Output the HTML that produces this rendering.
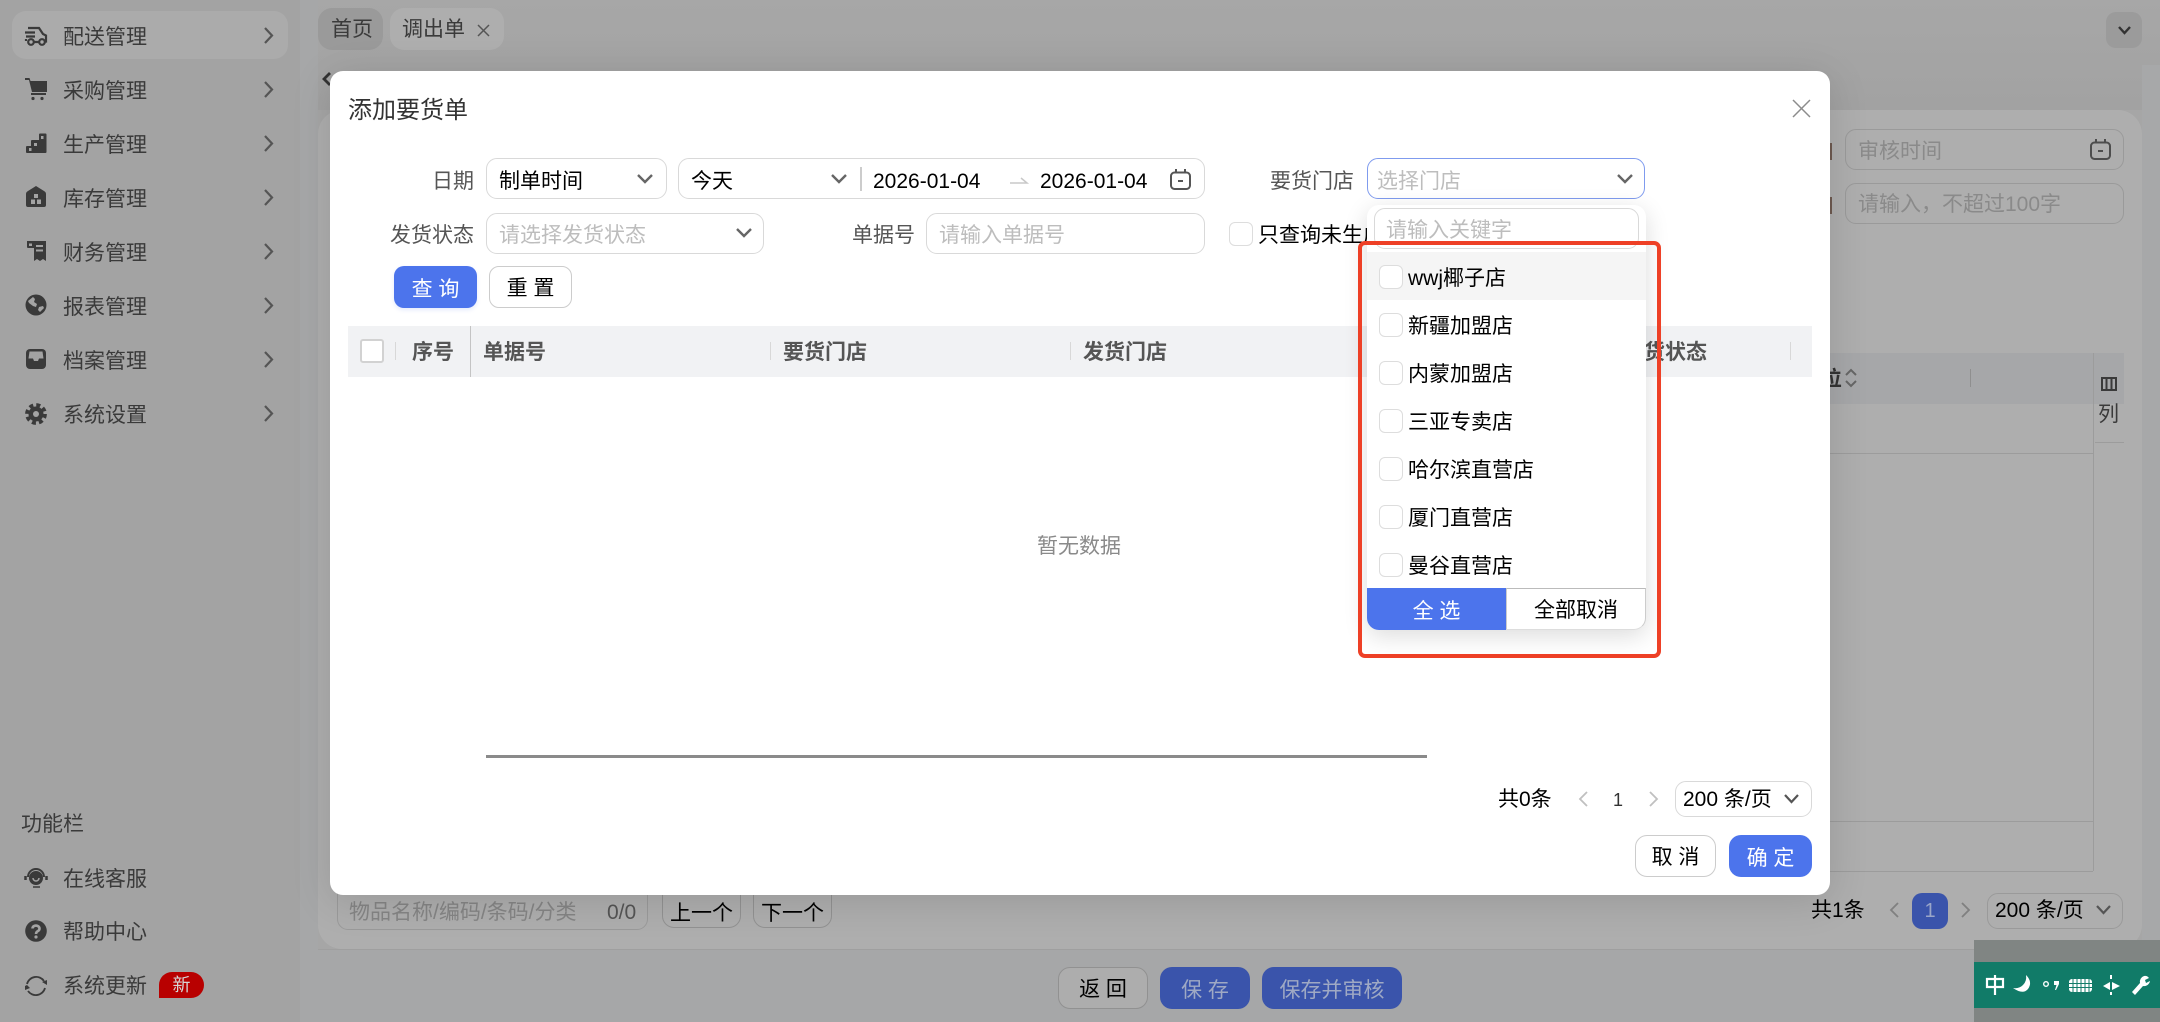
<!DOCTYPE html>
<html lang="zh"><head><meta charset="utf-8"><title>添加要货单</title>
<style>
*{box-sizing:border-box;margin:0;padding:0}
html,body{width:2160px;height:1022px;overflow:hidden;background:#a6a6a6}
body{position:relative;font-family:"Liberation Sans","Noto Sans CJK SC",sans-serif;font-size:21px;color:#000}
.a,.t,.b,.i{position:absolute}
.t{white-space:nowrap;line-height:30px;height:30px;margin-top:2px}
.b{text-align:center;white-space:nowrap;border-radius:10px;padding-top:2px}
.i{border:1.5px solid #d9d9d9;border-radius:11px;background:#fff}
.g{border-color:#9a9a9a;background:transparent}
svg{position:absolute;overflow:visible}
.s{color:#3a3a3a}
.h{font-weight:700;color:#555}
.cb{position:absolute;left:1379px;width:24px;height:24px;border:1.5px solid #ddd;border-radius:6px;background:#fff}
.p{color:#bdbdbd}
</style></head><body>
<!-- backgrounds -->
<div class="a" style="left:0;top:0;width:300px;height:1022px;background:#a3a3a3"></div>
<div class="a" style="left:300px;top:0;width:18px;height:1022px;background:#a6a7a8"></div>
<div class="a" style="left:318px;top:0;width:1842px;height:110px;background:linear-gradient(#a7a7a7,#a2a2a2)"></div>
<div class="a" style="left:2142px;top:65px;width:18px;height:957px;background:#a7a8a9"></div>
<div class="a" style="left:318px;top:110px;width:1824px;height:839px;background:#aeaeae;border-radius:24px"></div>
<div class="a" style="left:318px;top:949px;width:1842px;height:73px;background:#a6a7a8;border-top:1px solid #9f9f9f"></div>

<!-- sidebar -->
<div class="a" style="left:12px;top:11px;width:276px;height:48px;background:#ababab;border-radius:14px"></div>
<div class="t s" style="left:63px;top:21px">配送管理</div>
<div class="t s" style="left:63px;top:75px">采购管理</div>
<div class="t s" style="left:63px;top:129px">生产管理</div>
<div class="t s" style="left:63px;top:183px">库存管理</div>
<div class="t s" style="left:63px;top:237px">财务管理</div>
<div class="t s" style="left:63px;top:291px">报表管理</div>
<div class="t s" style="left:63px;top:345px">档案管理</div>
<div class="t s" style="left:63px;top:399px">系统设置</div>
<svg style="left:0;top:0" width="300" height="440" fill="none" stroke="#555" stroke-width="2.2">
<path d="M265 28l7 7.500-7 7.500M265 82l7 7.500-7 7.500M265 136l7 7.500-7 7.500M265 190l7 7.500-7 7.500M265 244l7 7.500-7 7.500M265 298l7 7.500-7 7.500M265 352l7 7.500-7 7.500M265 406l7 7.500-7 7.500"/>
</svg>
<!-- truck -->
<svg style="left:24px;top:25px" width="24" height="22" viewBox="0 0 24 22" fill="none" stroke="#3a3a3a" stroke-width="2.200"><path d="M4 3h11l4 6 3 1.500v6h-1M10 17h5M1 7.500h10M2 11.500h9M2 14v2"/><circle cx="7" cy="17" r="2.800"/><circle cx="18" cy="17" r="2.800"/></svg>
<!-- cart -->
<svg style="left:24px;top:77px" width="24" height="24" viewBox="0 0 24 24" fill="#3a3a3a"><path d="M1 1h4.500l1 3H23v11H8L5 3H1z"/><path d="M7 16h15v2H7z"/><circle cx="9" cy="21.500" r="1.600"/><circle cx="18" cy="21.500" r="1.600"/></svg>
<!-- stairs -->
<svg style="left:25px;top:133px" width="22" height="20" viewBox="0 0 22 20" fill="#3a3a3a"><path d="M14 1.500q0-1 1-1h5.500q1 0 1 1V19q0 1-1 1H2q-1 0-1-1v-5q0-1 1-1h4V8q0-1 1-1h7z"/><path fill="#a3a3a3" d="M9 10h3v3H9zM4 15h2.500v3H4zM16 3h2.500v3H16z"/></svg>
<!-- house -->
<svg style="left:25px;top:186px" width="22" height="22" viewBox="0 0 22 22" fill="#3a3a3a"><path d="M11 0l8 5q2 1 2 3v11q0 2-2 2H3q-2 0-2-2V8q0-2 2-3z"/><path fill="#a3a3a3" d="M9 8h4v4H9zM6 13.500h4V18H6zM12 13.500h4V18h-4z"/></svg>
<!-- receipt -->
<svg style="left:26px;top:240px" width="21" height="22" viewBox="0 0 21 22" fill="#3a3a3a"><path d="M1 1h19v20l-3-2-3 2-3-2-3 2V8H2q-1 0-1-1z"/><path fill="#a3a3a3" d="M10 5h7v2h-7zM10 9.500h7v2h-7zM3 3.500h3V6H3z"/></svg>
<!-- globe -->
<svg style="left:25px;top:294px" width="22" height="22" viewBox="0 0 22 22"><circle cx="11" cy="11" r="10.500" fill="#3a3a3a"/><path fill="#a3a3a3" d="M3 7l5-4 2 2-1 3 3 2-1 3-3-1-4-3zM14 13l4-1 1 2-4 4-2-2z"/></svg>
<!-- inbox -->
<svg style="left:26px;top:349px" width="20" height="20" viewBox="0 0 20 20"><rect x="0" y="0" width="20" height="20" rx="4" fill="#3a3a3a"/><path fill="#a3a3a3" d="M3.500 2.500h13l1 7H13l-1 2.500H8L7 9.500H2.500z"/></svg>
<!-- gear -->
<svg style="left:25px;top:403px" width="22" height="22" viewBox="0 0 22 22"><circle cx="11" cy="11" r="7.500" fill="#3a3a3a"/><circle cx="11" cy="11" r="9" fill="none" stroke="#3a3a3a" stroke-width="3.800" stroke-dasharray="4 3.070"/><circle cx="11" cy="11" r="3" fill="#a3a3a3"/></svg>

<div class="t s" style="left:21px;top:808px">功能栏</div>
<div class="t s" style="left:63px;top:863px">在线客服</div>
<div class="t s" style="left:63px;top:916px">帮助中心</div>
<div class="t s" style="left:63px;top:970px">系统更新</div>
<svg style="left:24px;top:866px" width="24" height="24" viewBox="0 0 24 24" fill="none" stroke="#3a3a3a"><path stroke-width="2" d="M4 11a8 8 0 0 1 16 0"/><circle cx="12" cy="12" r="6.500" fill="#3a3a3a"/><path stroke="#a3a3a3" stroke-width="1.500" d="M9 12a3 3 0 0 0 6 0"/><path stroke-width="2.500" d="M1.500 10v4M22.500 10v4"/><path stroke-width="1.500" d="M9 21h7"/></svg>
<svg style="left:25px;top:920px" width="22" height="22" viewBox="0 0 22 22"><circle cx="11" cy="11" r="10.800" fill="#3a3a3a"/><path fill="none" stroke="#a3a3a3" stroke-width="2.600" d="M7.500 8.500a3.500 3 0 1 1 5.500 2.500q-2 1-2 3"/><circle cx="11" cy="17" r="1.600" fill="#a3a3a3"/></svg>
<svg style="left:24px;top:974px" width="24" height="24" viewBox="0 0 24 24" fill="none" stroke="#3a3a3a" stroke-width="1.800"><path d="M3 10a9.500 9.500 0 0 1 17-3M21 14a9.500 9.500 0 0 1-17 3"/><path fill="#3a3a3a" stroke="none" d="M18 8l5-2v5zM1 12l2-1 3 3-5 2z"/></svg>
<div class="a" style="left:159px;top:972px;width:45px;height:26px;background:#b80000;border-radius:13px 13px 13px 0;color:#d5d5d5;font-size:18px;line-height:26px;text-align:center">新</div>

<!-- tabs -->
<div class="a" style="left:318px;top:8px;width:65px;height:42px;background:#9a9a9a;border-radius:14px"></div>
<div class="t s" style="left:331px;top:13px">首页</div>
<div class="a" style="left:390px;top:8px;width:114px;height:42px;background:#aeaeae;border-radius:14px"></div>
<div class="t s" style="left:402px;top:13px">调出单</div>
<svg style="left:477px;top:24px" width="13" height="13" fill="none" stroke="#555" stroke-width="1.500"><path d="M1 1l11 11M12 1L1 12"/></svg>
<div class="a" style="left:2106px;top:12px;width:36px;height:36px;background:#9b9b9b;border-radius:10px"></div>
<svg style="left:2118px;top:26px" width="13" height="9" fill="none" stroke="#333" stroke-width="2.400"><path d="M1 1l5.500 6L12 1"/></svg>
<svg style="left:322px;top:72px" width="9" height="14" fill="none" stroke="#333" stroke-width="2.800"><path d="M8 1L2 7l6 6"/></svg>

<!-- behind modal -->
<div class="a" style="left:1830px;top:143px;width:2px;height:17px;background:#6e5a50"></div>
<div class="a" style="left:1830px;top:197px;width:2px;height:17px;background:#6e5a50"></div>
<div class="i g" style="left:1845px;top:129px;width:279px;height:41px"></div>
<div class="t" style="left:1858px;top:135px;color:#8a8a8a">审核时间</div>
<svg style="left:2090px;top:139px" width="21" height="21" fill="none" stroke="#4d4d4d" stroke-width="2"><rect x="1" y="3.500" width="19" height="16.500" rx="3.500"/><path d="M6 0v4M15 0v4M8 12h5"/></svg>
<div class="i g" style="left:1845px;top:183px;width:279px;height:41px"></div>
<div class="t" style="left:1858px;top:188px;color:#8a8a8a">请输入，不超过100字</div>
<div class="a" style="left:1830px;top:353px;width:294px;height:51px;background:#a6a7a9"></div>
<div class="t h" style="left:1830px;top:363px;color:#333;width:12px;overflow:hidden;direction:rtl">位</div>
<svg style="left:1845px;top:369px" width="12" height="18" fill="none" stroke="#666" stroke-width="2"><path d="M1 6l5-5 5 5M1 12l5 5 5-5"/></svg>
<div class="a" style="left:1970px;top:369px;width:1px;height:18px;background:#8f8f8f"></div>
<div class="a" style="left:2093px;top:353px;width:1px;height:518px;background:#9c9c9c"></div>
<div class="a" style="left:1830px;top:453px;width:263px;height:1px;background:#9c9c9c"></div>
<div class="a" style="left:2095px;top:442px;width:29px;height:1px;background:#9c9c9c"></div>
<div class="a" style="left:1830px;top:821px;width:263px;height:1px;background:#9c9c9c"></div>
<div class="a" style="left:1830px;top:871px;width:263px;height:1px;background:#9c9c9c"></div>
<svg style="left:2101px;top:377px" width="16" height="14" fill="none" stroke="#3a3a3a" stroke-width="2"><rect x="1" y="1" width="14" height="12"/><path d="M5.500 1v12M10.500 1v12"/></svg>
<div class="t s" style="left:2098px;top:398px">列</div>
<div class="t" style="left:1811px;top:894px">共1条</div>
<svg style="left:1889px;top:902px" width="10" height="16" fill="none" stroke="#808080" stroke-width="1.800"><path d="M9 1L2 8l7 7"/></svg>
<div class="a" style="left:1912px;top:893px;width:36px;height:36px;background:#3a54ab;border-radius:10px;color:#9aa6c8;text-align:center;line-height:36px;font-size:20px">1</div>
<svg style="left:1961px;top:902px" width="10" height="16" fill="none" stroke="#808080" stroke-width="1.800"><path d="M1 1l7 7-7 7"/></svg>
<div class="i g" style="left:1987px;top:893px;width:136px;height:36px"></div>
<div class="t" style="left:1995px;top:894px">200 条/页</div>
<svg style="left:2096px;top:905px" width="15" height="10" fill="none" stroke="#555" stroke-width="2.200"><path d="M1 1l6.500 7L14 1"/></svg>

<div class="i g" style="left:337px;top:880px;width:311px;height:50px"></div>
<div class="t" style="left:349px;top:896px;color:#858585">物品名称/编码/条码/分类</div>
<div class="t" style="left:607px;top:896px;color:#555">0/0</div>
<div class="b" style="left:662px;top:880px;width:79px;height:48px;border:1.500px solid #929292;line-height:62px;border-radius:12px">上一个</div>
<div class="b" style="left:753px;top:880px;width:79px;height:48px;border:1.500px solid #929292;line-height:62px;border-radius:12px">下一个</div>

<!-- footer -->
<div class="b" style="left:1058px;top:967px;width:90px;height:42px;border:1.500px solid #919191;background:#adadad;line-height:40px;border-radius:12px">返 回</div>
<div class="b" style="left:1160px;top:967px;width:90px;height:42px;background:#3a54ab;color:#9fa9c4;line-height:43px;border-radius:12px">保 存</div>
<div class="b" style="left:1262px;top:967px;width:140px;height:42px;background:#3a54ab;color:#9fa9c4;line-height:43px;border-radius:12px">保存并审核</div>

<!-- IME -->
<div class="a" style="left:1974px;top:940px;width:186px;height:82px;background:#808583"></div>
<div class="a" style="left:1974px;top:962px;width:186px;height:46px;background:#117b68"></div>
<svg style="left:1974px;top:962px" width="186" height="46" fill="#fff">
<path d="M13 17h16v8H13z" fill="none" stroke="#fff" stroke-width="2.200"/><path d="M21 13v20" stroke="#fff" stroke-width="2.200"/>
<path d="M52 13q7 7 2 14-5 6-15-1 6 1 10-3 4-4 3-10z"/>
<circle cx="72" cy="22" r="2.300" fill="none" stroke="#fff" stroke-width="1.400"/><path d="M80 19h5v3l-3 6h-1l1.500-5H80z"/>
<rect x="95" y="17" width="23" height="13" rx="3"/><path stroke="#117b68" stroke-width="1" d="M99 17v13M103 17v13M107 17v13M111 17v13M115 17v13M95 21.500h23M95 25.500h23"/>
<path d="M136 20v8l-7-4zM138 20v8l8-4zM136 13h2v4h-2zM136 30h2v3h-2z"/>
<path d="M170 14a5 5 0 0 1 5 2l-4 2 1 3 4-2a6 6 0 0 1-7 5l-8 9-3-3 8-9a6 6 0 0 1 4-7z"/>
</svg>

<!-- modal -->
<div class="a" style="left:330px;top:71px;width:1500px;height:824px;background:#fff;border-radius:13px;box-shadow:0 6px 40px rgba(0,0,0,.13)"></div>
<div class="t" style="left:348px;top:94px;font-size:24px;color:#333">添加要货单</div>
<svg style="left:1793px;top:100px" width="17" height="17" fill="none" stroke="#8c8c8c" stroke-width="1.500"><path d="M0 0l17 17M17 0L0 17"/></svg>

<div class="t" style="left:432px;top:165px;color:#555">日期</div>
<div class="i" style="left:486px;top:158px;width:181px;height:41px"></div>
<div class="t" style="left:499px;top:165px">制单时间</div>
<svg style="left:637px;top:174px" width="16" height="10" fill="none" stroke="#666" stroke-width="2.400"><path d="M1 1l7 7 7-7"/></svg>
<div class="i" style="left:678px;top:158px;width:527px;height:41px"></div>
<div class="t" style="left:691px;top:165px">今天</div>
<svg style="left:831px;top:174px" width="16" height="10" fill="none" stroke="#666" stroke-width="2.400"><path d="M1 1l7 7 7-7"/></svg>
<div class="a" style="left:860px;top:167px;width:1.500px;height:24px;background:#ccc"></div>
<div class="t" style="left:873px;top:165px">2026-01-04</div>
<svg style="left:1010px;top:177px" width="18" height="8" fill="none" stroke="#c8c8c8" stroke-width="1.500"><path d="M0 6h17L11 1"/></svg>
<div class="t" style="left:1040px;top:165px">2026-01-04</div>
<svg style="left:1170px;top:169px" width="21" height="21" fill="none" stroke="#555" stroke-width="2"><rect x="1" y="3.500" width="19" height="16.500" rx="3.500"/><path d="M6 0v4M15 0v4M8 12h5"/></svg>

<div class="t" style="left:1270px;top:165px;color:#555">要货门店</div>
<div class="i" style="left:1367px;top:158px;width:278px;height:41px;border-color:#7f9bee"></div>
<div class="t p" style="left:1377px;top:165px">选择门店</div>
<svg style="left:1617px;top:174px" width="16" height="10" fill="none" stroke="#666" stroke-width="2.400"><path d="M1 1l7 7 7-7"/></svg>

<div class="t" style="left:390px;top:219px;color:#555">发货状态</div>
<div class="i" style="left:486px;top:213px;width:278px;height:41px"></div>
<div class="t p" style="left:499px;top:219px">请选择发货状态</div>
<svg style="left:736px;top:228px" width="16" height="10" fill="none" stroke="#666" stroke-width="2.400"><path d="M1 1l7 7 7-7"/></svg>
<div class="t" style="left:852px;top:219px;color:#555">单据号</div>
<div class="i" style="left:926px;top:213px;width:279px;height:41px"></div>
<div class="t p" style="left:939px;top:219px">请输入单据号</div>
<div class="a" style="left:1229px;top:222px;width:24px;height:24px;border:1.500px solid #ddd;border-radius:6px"></div>
<div class="t" style="left:1258px;top:219px">只查询未生成</div>

<div class="b" style="left:394px;top:266px;width:83px;height:42px;background:#4c74ec;color:#fff;line-height:43px;box-shadow:0 2px 4px rgba(76,116,236,.15)">查 询</div>
<div class="b" style="left:489px;top:266px;width:83px;height:42px;border:1.500px solid #ccc;line-height:40px">重 置</div>

<!-- table header -->
<div class="a" style="left:348px;top:326px;width:1464px;height:51px;background:#f1f2f4"></div>
<div class="a" style="left:360px;top:339px;width:24px;height:24px;background:#fff;border:2.500px solid #d2d2d2;border-radius:3px"></div>
<div class="a" style="left:395px;top:342px;width:1px;height:18px;background:#d8d8d8"></div>
<div class="a" style="left:470px;top:326px;width:1px;height:51px;background:#c4c4c4"></div>
<div class="a" style="left:770px;top:342px;width:1px;height:18px;background:#d8d8d8"></div>
<div class="a" style="left:1070px;top:342px;width:1px;height:18px;background:#d8d8d8"></div>
<div class="a" style="left:1790px;top:342px;width:1px;height:18px;background:#d8d8d8"></div>
<div class="t h" style="left:412px;top:336px">序号</div>
<div class="t h" style="left:483px;top:336px">单据号</div>
<div class="t h" style="left:783px;top:336px">要货门店</div>
<div class="t h" style="left:1083px;top:336px">发货门店</div>
<div class="t h" style="left:1623px;top:336px">发货状态</div>
<div class="t" style="left:1037px;top:530px;color:#8a8a8a">暂无数据</div>
<div class="a" style="left:486px;top:755px;width:941px;height:3px;background:#8a8a8a"></div>

<!-- pagination -->
<div class="t" style="left:1498px;top:783px">共0条</div>
<svg style="left:1578px;top:791px" width="10" height="16" fill="none" stroke="#c0c0c0" stroke-width="1.800"><path d="M9 1L2 8l7 7"/></svg>
<div class="t" style="left:1613px;top:783px;font-size:18px;color:#333">1</div>
<svg style="left:1649px;top:791px" width="10" height="16" fill="none" stroke="#c0c0c0" stroke-width="1.800"><path d="M1 1l7 7-7 7"/></svg>
<div class="i" style="left:1675px;top:781px;width:137px;height:36px"></div>
<div class="t" style="left:1683px;top:783px">200 条/页</div>
<svg style="left:1784px;top:794px" width="15" height="10" fill="none" stroke="#555" stroke-width="2.200"><path d="M1 1l6.500 7L14 1"/></svg>
<div class="b" style="left:1635px;top:835px;width:81px;height:42px;border:1.500px solid #ccc;line-height:40px;border-radius:12px">取 消</div>
<div class="b" style="left:1729px;top:835px;width:83px;height:42px;background:#4c74ec;color:#fff;line-height:43px;border-radius:12px">确 定</div>

<!-- dropdown -->
<div class="a" style="left:1367px;top:205px;width:279px;height:425px;background:#fff;border-radius:12px;box-shadow:0 6px 24px rgba(0,0,0,.14)"></div>
<div class="i" style="left:1374px;top:208px;width:265px;height:41px"></div>
<div class="t p" style="left:1386px;top:214px">请输入关键字</div>
<div class="a" style="left:1367px;top:252px;width:279px;height:48px;background:#f5f5f5"></div>
<div class="cb" style="top:265px"></div><div class="t" style="left:1408px;top:262px">wwj椰子店</div>
<div class="cb" style="top:313px"></div><div class="t" style="left:1408px;top:310px">新疆加盟店</div>
<div class="cb" style="top:361px"></div><div class="t" style="left:1408px;top:358px">内蒙加盟店</div>
<div class="cb" style="top:409px"></div><div class="t" style="left:1408px;top:406px">三亚专卖店</div>
<div class="cb" style="top:457px"></div><div class="t" style="left:1408px;top:454px">哈尔滨直营店</div>
<div class="cb" style="top:505px"></div><div class="t" style="left:1408px;top:502px">厦门直营店</div>
<div class="cb" style="top:553px"></div><div class="t" style="left:1408px;top:550px">曼谷直营店</div>
<div class="b" style="left:1367px;top:588px;width:139px;height:42px;background:#4c74ec;color:#fff;line-height:43px;border-radius:0 0 0 12px">全 选</div>
<div class="b" style="left:1506px;top:588px;width:140px;height:42px;border-top:1.500px solid #bbb;border-left:1.500px solid #ccc;border-right:1.500px solid #ccc;border-bottom:1px solid #ddd;line-height:40px;border-radius:0 0 12px 0;background:#fff">全部取消</div>
<div class="a" style="left:1358px;top:241px;width:303px;height:417px;border:4px solid #ee4026;border-radius:7px"></div>
</body></html>
